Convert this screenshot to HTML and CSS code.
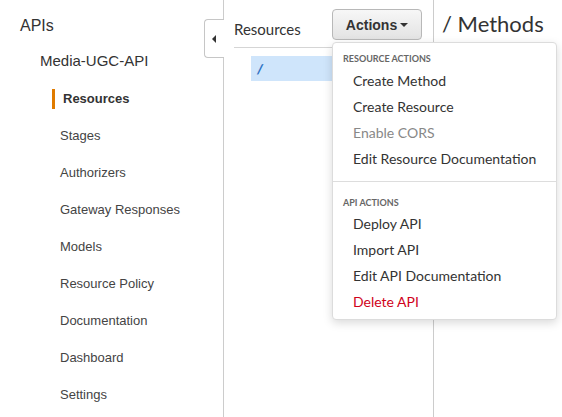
FILE: index.html
```html
<!doctype html>
<html>
<head>
	<meta charset="utf-8">
	<title>Media-UGC-API - Resources</title>
	<link rel="stylesheet" href="styles.css">
</head>
<body>
	<div class="console">
		<div class="sidenav">
			<div class="sidenav-title">APIs</div>
			<div class="sidenav-api">Media-UGC-API</div>
			<ul class="sidenav-list">
				<li class="active">Resources</li>
				<li>Stages</li>
				<li>Authorizers</li>
				<li>Gateway Responses</li>
				<li>Models</li>
				<li>Resource Policy</li>
				<li>Documentation</li>
				<li>Dashboard</li>
				<li>Settings</li>
			</ul>
			<div class="collapse-tab"><span class="tri"></span></div>
		</div>

		<div class="resources">
			<div class="resources-head">
				<span class="resources-title">Resources</span>
				<button class="actions-btn">Actions<span class="caret"></span></button>
			</div>
			<div class="tree">
				<div class="tree-row selected">/</div>
			</div>

			<div class="dropdown">
				<div class="dd-group">
					<div class="dd-header">Resource Actions</div>
					<div class="dd-item">Create Method</div>
					<div class="dd-item">Create Resource</div>
					<div class="dd-item disabled">Enable CORS</div>
					<div class="dd-item">Edit Resource Documentation</div>
				</div>
				<div class="dd-group">
					<div class="dd-header">API Actions</div>
					<div class="dd-item">Deploy API</div>
					<div class="dd-item">Import API</div>
					<div class="dd-item">Edit API Documentation</div>
					<div class="dd-item danger">Delete API</div>
				</div>
			</div>
		</div>

		<div class="methods">
			<h1 class="methods-title">/ Methods</h1>
		</div>
	</div>
</body>
</html>
```

FILE: styles.css
```css
* {margin:0; padding:0; box-sizing:border-box;}
html, body {height:100%;}
body {background:#fff; color:#333; font-family:"Liberation Sans", Arial, sans-serif; overflow:hidden;}

.console {display:flex; height:100%;}

/* left nav */
.sidenav {position:relative; width:224px; flex:none; border-right:1px solid #ccc; padding-top:16px;}
.sidenav-title {padding-left:20px; font-size:16px; line-height:20px; color:#333;}
.sidenav-api {padding-left:40px; margin-top:15px; font-size:15px; line-height:20px; color:#333;}
.sidenav-list {list-style:none; margin-top:9px;}
.sidenav-list li {padding-left:60px; height:37px; line-height:37px; font-size:13px; color:#444;}
.sidenav-list li.active {font-weight:bold; color:#333; padding-left:63px; position:relative;}
.sidenav-list li.active:before {content:""; position:absolute; left:52px; top:9px; width:3px; height:20px; background:#e07b00;}

.collapse-tab {position:absolute; right:-1px; top:19px; width:20px; height:39px; border:1px solid #c6c6c6; border-right:none; border-radius:4px 0 0 4px; background:#fff; display:flex; align-items:center; justify-content:center;}
.collapse-tab .tri {width:0; height:0; border-top:4px solid transparent; border-bottom:4px solid transparent; border-right:4px solid #333; margin-left:-2px;}

/* resources tree */
.resources {position:relative; width:210px; flex:none; border-right:1px solid #ccc; padding:0 10px; font-family:Lato, "Liberation Sans", sans-serif;}
.resources-head {display:flex; align-items:center; justify-content:space-between; height:48px; border-bottom:1px solid #d5d5d5; padding-top:1px;}
.resources-title {font-size:15px; color:#333; margin-top:10px;}
.actions-btn {height:31px; width:90px; margin-right:1px; border:1px solid #b8b8b8; border-radius:4px; background:linear-gradient(#f7f7f7, #e3e3e3); font:bold 14px "Liberation Sans", Arial, sans-serif; color:#333; display:flex; align-items:center; justify-content:center; padding-top:1px;}
.caret {display:inline-block; margin-left:3px; width:0; height:0; border-left:4px solid transparent; border-right:4px solid transparent; border-top:4px solid #333;}

.tree {padding-top:8px;}
.tree-row {margin-left:17px; height:25px; line-height:25px; padding-left:6px; font-size:14px; font-style:italic; font-weight:900; color:#2f73c4;}
.tree-row.selected {background:#cfe5fb;}

/* actions menu */
.dropdown {position:absolute; left:108px; top:42px; width:225px; background:#fff; border:1px solid #dcdcdc; border-radius:4px; box-shadow:0 3px 10px rgba(0,0,0,0.15); z-index:2;}
.dd-group {padding:10px 0 9px;}
.dd-group + .dd-group {border-top:1px solid #ddd; padding-top:15px; padding-bottom:4px;}
.dd-header {padding-left:10px; font-size:9px; font-weight:bold; text-transform:uppercase; color:#666; line-height:12px; margin-bottom:3px;}
.dd-group + .dd-group .dd-header {margin-bottom:2px;}
.dd-item {padding-left:20px; height:26px; line-height:26px; font-size:14px; color:#333;}
.dd-item.disabled {color:#888;}
.dd-item.danger {color:#d0021b;}

/* methods */
.methods {flex:1; padding:9px 0 0 8px; font-family:Lato, "Liberation Sans", sans-serif;}
.methods-title {font-size:22px; font-weight:normal; color:#333; line-height:30px;}
```
